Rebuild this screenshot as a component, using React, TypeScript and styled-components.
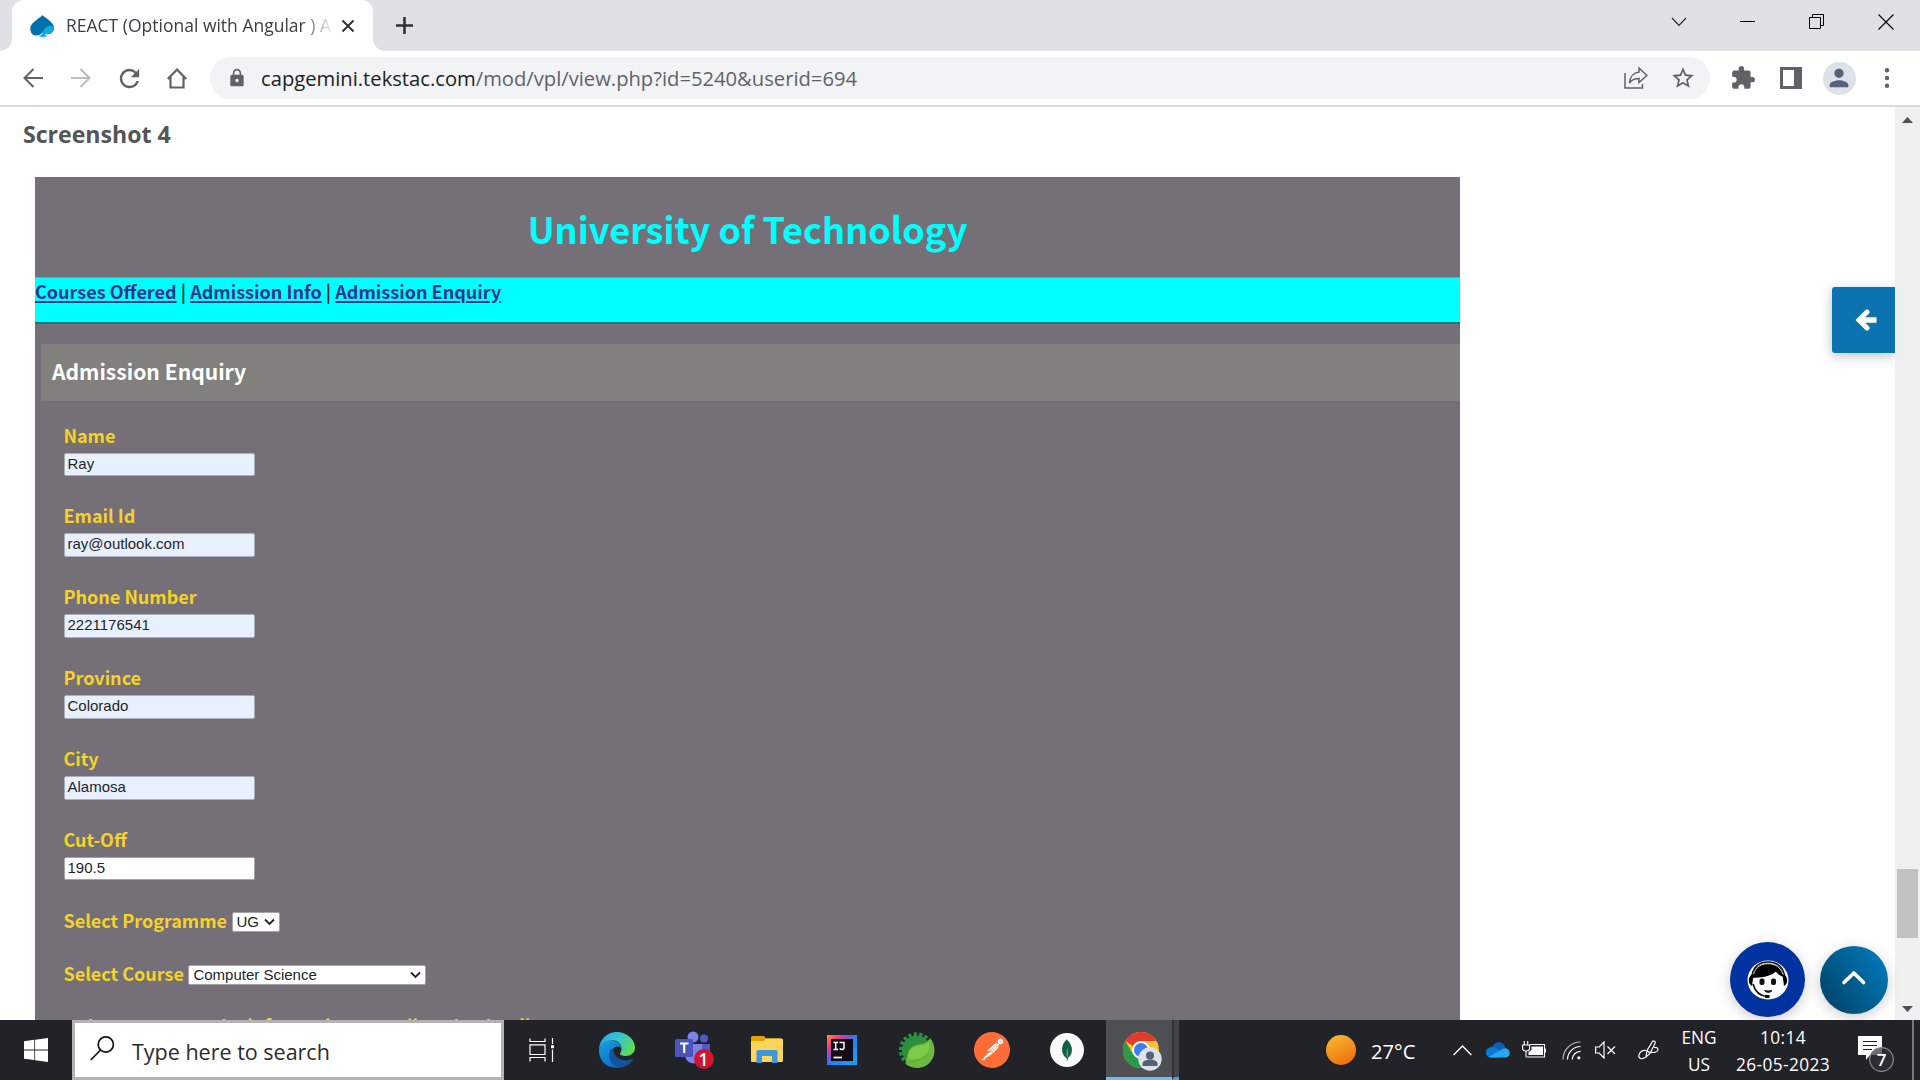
import React from "react";
import styled, { createGlobalStyle } from "styled-components";
import { MdExtension, MdStarBorder, MdLock, MdPerson, MdRefresh } from "react-icons/md";
import { SiPostman, SiMongodb } from "react-icons/si";

const ui = `"Open Sans", "Noto Sans", sans-serif`;
const source = `"Noto Sans CJK SC", "Noto Sans", sans-serif`;
const arial = `"Liberation Sans", Arial, sans-serif`;

const Global = createGlobalStyle`
  * { box-sizing: border-box; }
  body { margin: 0; background: #fff; overflow: hidden; }
  svg { display: block; flex: none; }
`;

const Screen = styled.div`
  width: 1920px;
  height: 1080px;
  display: flex;
  flex-direction: column;
  overflow: hidden;
  font-family: ${ui};
`;

/* ---------- browser chrome ---------- */
const TabStrip = styled.div`
  height: 51px;
  flex: none;
  background: #dee1e6;
  display: flex;
`;
const Shoulder = styled.div<{ $side: "left" | "right" }>`
  width: 12px;
  height: 51px;
  background: radial-gradient(circle at ${(p) => (p.$side === "left" ? "0 0" : "100% 0")}, #dee1e6 11.5px, #fff 12.2px) 0 39px / 12px 12px no-repeat;
`;
const Tab = styled.div`
  width: 361px;
  height: 51px;
  background: #fff;
  border-radius: 12px 12px 0 0;
  display: flex;
  align-items: center;
  padding: 0 15px 0 18px;
`;
const TabTitle = styled.div`
  width: 266px;
  margin-left: 12px;
  overflow: hidden;
  white-space: nowrap;
  font-size: 17.5px;
  line-height: 50px;
  padding-bottom: 1px;
  color: #3c4043;
  mask-image: linear-gradient(90deg, #000 235px, transparent 268px);
`;
const TabClose = styled.div`
  margin-left: auto;
`;
const NewTab = styled.div`
  padding: 16px 0 0 10px;
`;
const WindowButtons = styled.div`
  margin-left: auto;
  display: flex;
  align-items: center;
  height: 43px;
`;
const WinButton = styled.div`
  width: 69px;
  display: flex;
  justify-content: center;
`;
const Toolbar = styled.div`
  height: 56px;
  flex: none;
  display: flex;
  align-items: center;
  border-bottom: 2px solid #d9dadc;
  color: #5f6368;
  padding: 0 9px 0 9px;
`;
const NavButton = styled.div`
  width: 48px;
  display: flex;
  justify-content: center;
`;
const Omnibox = styled.div`
  flex: 1;
  height: 42px;
  margin: 0 9px 0 9px;
  border-radius: 21px;
  background: #f1f3f4;
  display: flex;
  align-items: center;
  padding: 0 14px 0 17px;
  gap: 22.5px;
`;
const Url = styled.div`
  flex: 1;
  margin-left: -8.5px;
  font-size: 20.2px;
  line-height: 42px;
  color: #5f6368;
  white-space: nowrap;
`;
const Host = styled.span`
  color: #202124;
`;
const ToolIcon = styled.div`
  width: 48px;
  display: flex;
  justify-content: center;
`;
const Avatar = styled.div`
  width: 33px;
  height: 33px;
  border-radius: 50%;
  background: #dee1e6;
  color: #55617a;
  display: flex;
  align-items: center;
  justify-content: center;
`;

/* ---------- page ---------- */
const Viewport = styled.div`
  height: 913px;
  flex: none;
  display: flex;
  position: relative;
  overflow: hidden;
`;
const Page = styled.div`
  flex: 1;
  padding: 8px 0 0 23px;
  overflow: hidden;
`;
const Caption = styled.h4`
  margin: 0;
  font-size: 23.1px;
  font-weight: 700;
  line-height: 38px;
  color: #555;
  white-space: nowrap;
`;
const Site = styled.div`
  width: 1425px;
  height: 860px;
  margin: 24px 0 0 12px;
  background: #757077;
  font-family: ${source};
  font-weight: 700;
  overflow: hidden;
`;
const SiteTitle = styled.h1`
  margin: 0;
  height: 100px;
  font-size: 36.1px;
  line-height: 100px;
  padding-top: 1px;
  text-align: center;
  color: #0ff;
  white-space: nowrap;
`;
const SiteNav = styled.nav`
  height: 47px;
  background: #0ff;
  border-top: 1px solid #3bb8bd;
  border-bottom: 2px solid #1e7479;
  font-size: 18.05px;
  line-height: 27px;
  color: #10302c;
  white-space: nowrap;
`;
const NavLink = styled.a`
  color: #2a3391;
  text-decoration: underline;
  text-decoration-thickness: 2px;
  text-underline-offset: 2px;
`;
const FormTitle = styled.h2`
  margin: 20px 0 0 6px;
  height: 57px;
  background: #82807c;
  padding-left: 11px;
  font-size: 21.1px;
  line-height: 54px;
  color: #fff;
  white-space: nowrap;
`;
const Form = styled.div`
  padding: 19.5px 0 0 28.5px;
  display: flex;
  flex-direction: column;
  align-items: flex-start;
  color: #f5d328;
  font-size: 18px;
`;
const Field = styled.div`
  height: 80.9px;
  flex: none;
`;
const Label = styled.label`
  display: block;
  line-height: 29px;
  white-space: nowrap;
`;
const Input = styled.div<{ $plain?: boolean }>`
  width: 191px;
  height: 23.5px;
  margin: 3px 0 0 0;
  border: 1px solid ${(p) => (p.$plain ? "#a5a3a8" : "#a9b0c0")};
  border-radius: 2px;
  background: ${(p) => (p.$plain ? "#fff" : "#e8f0fe")};
  color: #22252b;
  font: 400 15px/19px ${arial};
  padding-left: 3px;
  white-space: nowrap;
`;
const SelectRow = styled.div`
  height: 52.8px;
  flex: none;
  display: flex;
  align-items: flex-start;
`;
const Select = styled.div<{ $width: number }>`
  width: ${(p) => p.$width}px;
  height: 20px;
  margin: 6.5px 0 0 4.5px;
  border: 1px solid #a5a3a8;
  border-radius: 2px;
  background: #fff;
  color: #22252b;
  font: 400 15px/18px ${arial};
  padding: 0 4px;
  display: flex;
  justify-content: space-between;
  align-items: center;
  white-space: nowrap;
`;
const CheckText = styled.label`
  line-height: 29px;
  padding-left: 24px;
  white-space: nowrap;
`;
const Scrollbar = styled.div`
  width: 25px;
  background: #f0f0f0;
  display: flex;
  flex-direction: column;
  align-items: center;
  padding: 10px 0 8px;
`;
const Thumb = styled.div`
  width: 21px;
  height: 69px;
  margin-top: auto;
  margin-bottom: 68px;
  background: #c1c1c1;
`;
const Drawer = styled.div`
  position: absolute;
  right: 25px;
  top: 180px;
  width: 63px;
  height: 66px;
  border-radius: 3px 0 0 3px;
  background: #0b74b0;
  box-shadow: 0 3px 12px rgba(0, 0, 0, 0.25);
  clip-path: inset(-20px 0 -20px -20px);
  display: flex;
  align-items: center;
  justify-content: center;
  padding-left: 5px;
`;
const Floating = styled.div`
  position: absolute;
  right: 32px;
  bottom: 3px;
  display: flex;
  align-items: center;
  gap: 15px;
`;
const Round = styled.div<{ $size: number; $bg: string }>`
  width: ${(p) => p.$size}px;
  height: ${(p) => p.$size}px;
  border-radius: 50%;
  background: ${(p) => p.$bg};
  box-shadow: 0 3px 14px rgba(0, 0, 0, 0.2);
  display: flex;
  align-items: center;
  justify-content: center;
`;

/* ---------- taskbar ---------- */
const Taskbar = styled.div`
  height: 60px;
  flex: none;
  background: #212328;
  color: #fff;
  display: flex;
`;
const Start = styled.div`
  width: 72px;
  display: flex;
  align-items: center;
  justify-content: center;
`;
const Search = styled.div`
  width: 432px;
  height: 60px;
  border: 3px solid #b2b2b2;
  background: #fff;
  color: #2b2b2b;
  display: flex;
  align-items: center;
  padding: 2px 0 0 15px;
  gap: 17px;
  font-size: 21.5px;
  white-space: nowrap;
`;
const SearchGlyph = styled.div`
  padding-bottom: 5px;
`;
const Task = styled.div<{ $nudge?: number }>`
  width: 75px;
  padding-left: ${(p) => p.$nudge ?? 0}px;
  display: flex;
  align-items: center;
  justify-content: center;
`;
const MongoDisc = styled.div`
  width: 34px;
  height: 34px;
  border-radius: 50%;
  background: #fafafa;
  display: flex;
  align-items: center;
  justify-content: center;
`;
const PostmanDisc = styled.div`
  width: 36px;
  height: 36px;
  border-radius: 50%;
  background: radial-gradient(circle, #fff 60%, transparent 61%);
`;
const ActiveTask = styled.div`
  width: 66px;
  height: 60px;
  margin-left: 2px;
  background: #4e5055;
  border-bottom: 3px solid #76b9ed;
  display: flex;
  align-items: center;
  justify-content: center;
  padding: 5px 0 0 6px;
`;
const StackEdge = styled.div`
  width: 7px;
  height: 60px;
  background: #43454a;
  border-left: 2px solid #2f3135;
  border-bottom: 3px solid #5c9bcd;
`;
const Tray = styled.div`
  margin-left: auto;
  display: flex;
  align-items: center;
`;
const Temperature = styled.div`
  width: 73px;
  margin-left: 15px;
  padding-top: 2px;
  font-size: 20.2px;
  white-space: nowrap;
`;
const TrayIcon = styled.div<{ $width: number }>`
  width: ${(p) => p.$width}px;
  display: flex;
  justify-content: center;
`;
const BadgeIcon = styled.div`
  width: 68px;
  padding: 7px 0 0 14px;
`;
const TwoLines = styled.div<{ $width: number; $spacing?: number }>`
  width: ${(p) => p.$width}px;
  font-size: 17.3px;
  letter-spacing: ${(p) => p.$spacing ?? 0}px;
  line-height: 27px;
  padding-top: 1px;
  text-align: center;
  white-space: nowrap;
`;
const ShowDesktop = styled.div`
  width: 8px;
  height: 60px;
  border-left: 2px solid #77787b;
`;

const fields: [string, string, boolean][] = [
  ["Name", "Ray", false],
  ["Email Id", "ray@outlook.com", false],
  ["Phone Number", "2221176541", false],
  ["Province", "Colorado", false],
  ["City", "Alamosa", false],
  ["Cut-Off", "190.5", true],
];

const Favicon = () => (
  <svg width="24" height="24" viewBox="0 0 24 24">
    <path d="M12.500 1C10.500 4 1 8 .3 14 0 19 3 21.500 6.500 21.500 9.500 21.500 11.500 20 12.500 18.500 14 20 16 20.500 18 20.300 22 19.800 24 17 24 13.500 24 8 15 4 12.500 1Z" fill="#0070ad" />
    <path d="M24 12.500C19 10.500 15 13 13 18.200 12.200 20.500 10.500 21.600 8.500 22.300 11 23.300 15 23 17.500 22.300 15.500 21.500 15 20.500 15 19.700 20 21 24 18 24 12.500Z" fill="#12abdb" />
  </svg>
);

const Arrow = ({ flip, color }: { flip?: boolean; color: string }) => (
  <svg width="20" height="20" viewBox="0 0 20 20" fill="none" stroke={color} strokeWidth="2" transform={flip ? "scale(-1 1)" : undefined}>
    <path d="M20 10H2M10.500 1 1.500 10l9 9" />
  </svg>
);

const SelectArrow = () => (
  <svg width="11" height="8" viewBox="0 0 11 8" fill="none" stroke="#222" strokeWidth="1.800">
    <path d="M1 1.500 5.500 6 10 1.500" />
  </svg>
);

const Agent = () => (
  <svg width="42" height="40" viewBox="0 0 42 40">
    <ellipse cx="21" cy="20" rx="20.500" ry="19.500" fill="#fff" />
    <path d="M6 18C5 9 11 3.500 21 3.500S37 9 36.500 17C34 16 30 14 29 11.500 24 17 12 17.500 6 18Z" fill="#000" />
    <path d="M5 15C7 6 13 2 21 2s14.500 4 16.500 13" fill="none" stroke="#111" strokeWidth="1.500" />
    <path d="M6.500 14C9 7 14 3.700 21 3.700s12.500 3.500 15 10.500" fill="none" stroke="#ddd" strokeWidth="1" />
    <path d="M4 15c-3 3-3 9 1 11l1.500-11ZM38 15c3 3 3 9-1 11l-1.500-11Z" fill="#000" />
    <path d="M6 24c2 7 7 12 14 12.500" fill="none" stroke="#111" strokeWidth="1.700" />
    <rect x="18" y="35" width="4.500" height="3" fill="#111" />
    <rect x="12.500" y="18.500" width="5" height="6.500" rx="2" fill="#111" />
    <rect x="24" y="18.500" width="5" height="6.500" rx="2" fill="#111" />
    <path d="M17.500 30.500c2 2.500 5.500 2.500 7.500 0-2 .6-5.500.6-7.500 0Z" fill="#111" stroke="#111" />
  </svg>
);

const TaskView = () => (
  <svg width="26" height="24" viewBox="0 0 26 24" fill="none" stroke="#fff" strokeWidth="1.200">
    <path d="M1 .5v3h15v-3M1 6.800h15v9.700H1ZM1 23.500v-4h15v4M23.500 0v6M23.500 11.500V24" />
    <path d="M22 7.200h3v3h-3z" fill="#fff" stroke="none" />
  </svg>
);

const Edge = () => (
  <svg width="36" height="36" viewBox="0 0 36 36">
    <defs>
      <linearGradient id="eTop" x1="0" y1="0.2" x2="1" y2="0.6">
        <stop offset="0" stopColor="#2aa9e0" />
        <stop offset="0.5" stopColor="#35c5d4" />
        <stop offset="1" stopColor="#62de4a" />
      </linearGradient>
      <linearGradient id="eLeft" x1="0" y1="0" x2="0.6" y2="1">
        <stop offset="0" stopColor="#1c9de0" />
        <stop offset="1" stopColor="#0b6fcb" />
      </linearGradient>
    </defs>
    <path d="M0 17C1 6 9 0 18 0s18 7 18 15.500C36 21 31.500 24 27 24c-4 0-6.500-1.300-6-2.500 3-4 2-11.500-6-13C8 8 2 11 0 17Z" fill="url(#eTop)" />
    <path d="M0 18.500C0 12 5 8.500 11 8.500c6.500 0 11 3.500 11.300 7.500-3-3-7.800-1.500-9.300 2-3 7 3 14 10 17C8.500 38.500 0 29 0 18.500Z" fill="url(#eLeft)" />
    <path d="M11.500 18c-4 8 1 16.500 9.500 17.700C28 35 32 31 34 27.500c.2-.8-.4-1-1-.7C25 30.500 14.500 27 14.300 17 13 16.500 12 17 11.500 18Z" fill="#12549c" />
  </svg>
);

const Teams = () => (
  <svg width="40" height="38" viewBox="0 0 40 38">
    <circle cx="19" cy="6" r="5.500" fill="#7b83eb" />
    <circle cx="30" cy="7.500" r="4" fill="#5059c9" />
    <path d="M22 13h14v9a7 7 0 0 1-14 0Z" fill="#5059c9" />
    <path d="M11 13h17v11a8.500 8.500 0 0 1-17 0Z" fill="#7b83eb" />
    <rect x="1" y="8" width="18" height="18" rx="1.500" fill="#4b53bc" />
    <path d="M6 12.500h8.500M10.200 12.500v9.500" stroke="#fff" strokeWidth="2.200" />
    <circle cx="30" cy="28" r="10" fill="#cf1530" />
    <text x="29.500" y="34.500" textAnchor="middle" fontFamily="Open Sans, sans-serif" fontSize="18" fontWeight="600" fill="#fff">1</text>
  </svg>
);

const Explorer = () => (
  <svg width="32" height="28" viewBox="0 0 32 28">
    <path d="M0 1.500A1.500 1.500 0 0 1 1.500 0H13l2 2.500h15A1.500 1.500 0 0 1 31.500 4v20.500a1.500 1.500 0 0 1-1.500 1.500H1.500A1.500 1.500 0 0 1 0 24.500Z" fill="#e6a100" />
    <path d="M0 5h13l2-2.500h15.500A1.500 1.500 0 0 1 32 4v20.500a1.500 1.500 0 0 1-1.500 1.500h-29A1.500 1.500 0 0 1 0 24.500Z" fill="#ffd45c" />
    <path d="M5.500 27V15.500a1.500 1.500 0 0 1 1.500-1.500h18a1.500 1.500 0 0 1 1.500 1.500V27h-5.500v-7H11v7Z" fill="#3a96dd" />
  </svg>
);

const IntelliJ = () => (
  <svg width="30" height="30" viewBox="0 0 30 30">
    <defs>
      <linearGradient id="ij" x1="0" y1="0" x2="1" y2="1">
        <stop offset="0" stopColor="#fc9a2a" />
        <stop offset="0.2" stopColor="#fe3f70" />
        <stop offset="0.4" stopColor="#8a4ad8" />
        <stop offset="0.55" stopColor="#1788f5" />
        <stop offset="1" stopColor="#1aa0fa" />
      </linearGradient>
    </defs>
    <rect width="30" height="30" fill="url(#ij)" />
    <rect x="4" y="4" width="22" height="22" fill="#160a16" />
    <path d="M6.500 7.500h4.500M6.500 14.500h4.500M8.700 7.500v7M12.500 7.500h4.500v5c0 1.500-1 2-2 2s-1.700-.3-2.200-1" fill="none" stroke="#fff" strokeWidth="1.500" />
    <path d="M6.500 22.500h8.500" stroke="#fff" strokeWidth="1.700" />
  </svg>
);

const Spring = () => (
  <svg width="36" height="36" viewBox="0 0 36 36">
    <circle cx="17.500" cy="18" r="14.500" fill="#2c8f3f" />
    <circle cx="17.500" cy="18" r="15.500" fill="none" stroke="#2c8f3f" strokeWidth="4.500" strokeDasharray="3.200 2.400" pathLength={100.8} />
    <path d="M31 6c5 6 6 15 2 21.500C28 36 18 38.500 8 33c-2-3-2-6 1-8C8 16 15 13 22 12c4-.6 7-2 9-6Z" fill="#6cb93f" />
    <path d="M5 30c9 1 22-2 25-15-1 5-4 10-9 12-5 2.500-10 3-16 3Z" fill="#1f7a39" />
    <path d="M9 27.500C7 20 13 15 20 14c4.500-.6 7.500-1 10-4 1 8-1 13-8 15.500-5 1.800-9 1-13 2Z" fill="#7fc94b" />
  </svg>
);

const Chrome = () => (
  <svg width="39" height="39" viewBox="0 0 39 39">
    <circle cx="18" cy="18" r="18" fill="#fbc230" />
    <path d="M2.400 9A18 18 0 0 1 33.600 9H18a9 9 0 0 0-8 5Z" fill="#e33b2e" />
    <path d="M2.400 9A18 18 0 0 0 18 36l7.800-13.500L10.200 22.500Z" fill="#2b9a47" />
    <circle cx="18" cy="18" r="8.800" fill="#fff" />
    <circle cx="18" cy="18" r="7" fill="#3b7df0" />
    <circle cx="27" cy="27" r="11.700" fill="#dee1e6" />
    <circle cx="27" cy="23.500" r="4" fill="#55617a" />
    <path d="M19.500 34v-2.500c0-3 5-4 7.500-4s7.500 1 7.500 4V34Z" fill="#55617a" />
  </svg>
);

const OneDrive = () => (
  <svg width="24" height="16" viewBox="0 0 24 16">
    <path d="M6 6C7.500 1.500 11 0 13.500.3 17 .8 19 3.500 19.500 6L14 11Z" fill="#0a62b8" />
    <path d="M5 15.500C1 15.500 0 12.500 0 10.500 0 7 3 5 6 5c3.500 0 7 3 12 6l-6 4.500Z" fill="#0d7bd6" />
    <path d="M3 14.800 15 8c1.500-2 7-3 8.500 1.500 1 3-.5 6-4 6H5.500c-1 0-2-.3-2.500-.7Z" fill="#2aa7ef" />
  </svg>
);

const Battery = () => (
  <svg width="25" height="18" viewBox="0 0 25 18" fill="none" stroke="#fff" strokeWidth="1.100">
    <path d="M8 3.500h14.500v12.500H5M23.500 7.500v4" />
    <path d="M9.500 5.500h11.500v8.500H6.500v-3l3-2Z" fill="#fff" stroke="none" />
    <path d="M2.300 0v4M5.700 0v4M.6 4h7v3c0 2-1.500 3-3.500 3S.6 9 .6 7ZM4 10v6.500" />
  </svg>
);

const Wifi = () => (
  <svg width="19" height="19" viewBox="0 0 19 19" fill="none" stroke="#fff" strokeWidth="1.200">
    <path d="M1 18.500A17.500 17.500 0 0 1 18.500 1" stroke="#b9babc" />
    <path d="M5.500 18.500a13 13 0 0 1 13-13M10.300 18.500a8.200 8.200 0 0 1 8.200-8.200" />
    <circle cx="16.800" cy="16.800" r="1.600" fill="#fff" stroke="none" />
  </svg>
);

const Speaker = () => (
  <svg width="21" height="18" viewBox="0 0 21 18" fill="none" stroke="#fff" strokeWidth="1.200">
    <path d="M.6 6h3.600L9 1v16l-4.800-5H.6ZM12.500 5.500l7.500 7.500M20 5.500 12.500 13" />
  </svg>
);

const Pen = () => (
  <svg width="21" height="20" viewBox="0 0 21 20" fill="none" stroke="#fff" strokeWidth="1.200">
    <path d="M8 17 9 10.500 14.500 1.500c.7-1.200 3.300.2 2.700 1.600L12 13.500 8 17ZM9 10.500l3 2.500" />
    <path d="M8 10.500C4 10 .8 12.500.8 16c0 3 4.500 3.800 6.200 1M12.500 12c2 1 7 .5 7.500-2 .2-2-1.500-2.800-4-2.700" />
  </svg>
);

const Notification = () => (
  <svg width="37" height="37" viewBox="0 0 37 37">
    <path d="M0 1h24v19H12l-4 5v-5H0Z" fill="#fff" />
    <path d="M5 6.500h14M5 10.500h14M5 14.500h9" stroke="#222" strokeWidth="1.200" />
    <circle cx="23.500" cy="24.500" r="11.800" fill="#2d2f33" fillOpacity="0.920" stroke="#8b8c8f" strokeWidth="1.200" />
    <path d="M12.500 20A11.800 11.800 0 0 1 24 12.700V20Z" fill="#77787b" fillOpacity="0.800" />
    <text x="23.500" y="30.500" textAnchor="middle" fontFamily="Open Sans, sans-serif" fontSize="17" fontWeight="600" fill="#fff">7</text>
  </svg>
);

export default function App() {
  return (
    <Screen>
      <Global />
      <TabStrip>
        <Shoulder $side="left" />
        <Tab>
          <Favicon />
          <TabTitle>REACT (Optional with Angular ) A</TabTitle>
          <TabClose>
            <svg width="20" height="14" viewBox="0 0 20 14" stroke="#303336" strokeWidth="2">
              <path d="M4.500 1.500 15.500 12.500M15.500 1.500 4.500 12.500" />
            </svg>
          </TabClose>
        </Tab>
        <Shoulder $side="right" />
        <NewTab>
          <svg width="19" height="19" viewBox="0 0 19 19" stroke="#303336" strokeWidth="2.600">
            <path d="M9.500 1v17M1 9.500h17" />
          </svg>
        </NewTab>
        <WindowButtons>
          <WinButton>
            <svg width="16" height="10" viewBox="0 0 16 10" fill="none" stroke="#222" strokeWidth="1.100"><path d="M1 1l7 7.500L15 1" /></svg>
          </WinButton>
          <WinButton>
            <svg width="15" height="1" viewBox="0 0 15 1"><path d="M0 0h15v1H0z" /></svg>
          </WinButton>
          <WinButton>
            <svg width="16" height="16" viewBox="0 0 16 16" fill="none" stroke="#000"><path d="M.5 3.500h11v11H.5ZM3.500 3.500v-3h11v11h-3" /></svg>
          </WinButton>
          <WinButton>
            <svg width="16" height="16" viewBox="0 0 16 16" stroke="#000" strokeWidth="1.100"><path d="M.5.500l15 15M15.500.500l-15 15" /></svg>
          </WinButton>
        </WindowButtons>
      </TabStrip>
      <Toolbar>
        <NavButton><Arrow color="#5f6368" /></NavButton>
        <NavButton><Arrow color="#b9bbbe" flip /></NavButton>
        <NavButton><MdRefresh size={29} /></NavButton>
        <NavButton>
          <svg width="20" height="21" viewBox="0 0 20 21" fill="none" stroke="#5f6368" strokeWidth="2.200">
            <path d="M.8 11 10 1.500 19.200 11M3.500 9v10.500h13V9" />
          </svg>
        </NavButton>
        <Omnibox>
          <MdLock size={20} />
          <Url>
            <Host>capgemini.tekstac.com</Host>/mod/vpl/view.php?id=5240&amp;userid=694
          </Url>
          <svg width="24" height="22" viewBox="0 0 24 22" fill="none" stroke="#5f6368" strokeWidth="1.500">
            <path d="M1 6v15h17.500v-4M15 1l8 7.500-8 7v-4c-5 0-7.500 1.500-9.500 4.500C6 10 9.500 5.500 15 5Z" />
          </svg>
          <MdStarBorder size={26} />
        </Omnibox>
        <ToolIcon><MdExtension size={26} /></ToolIcon>
        <ToolIcon>
          <svg width="22" height="22" viewBox="0 0 22 22"><path fillRule="evenodd" d="M0 0h22v22H0ZM3 3v16h11V3Z" fill="#5f6368" /></svg>
        </ToolIcon>
        <ToolIcon><Avatar><MdPerson size={28} /></Avatar></ToolIcon>
        <ToolIcon>
          <svg width="6" height="20" viewBox="0 0 6 20" fill="#5f6368"><circle cx="3" cy="2.300" r="2.200" /><circle cx="3" cy="10" r="2.200" /><circle cx="3" cy="17.700" r="2.200" /></svg>
        </ToolIcon>
      </Toolbar>

      <Viewport>
        <Page>
          <Caption>Screenshot 4</Caption>
          <Site>
            <SiteTitle>University of Technology</SiteTitle>
            <SiteNav>
              <NavLink>Courses Offered</NavLink> | <NavLink>Admission Info</NavLink> | <NavLink>Admission Enquiry</NavLink>
            </SiteNav>
            <FormTitle>Admission Enquiry</FormTitle>
            <Form>
              {fields.map(([label, value, plain]) => (
                <Field key={label}>
                  <Label>{label}</Label>
                  <Input $plain={plain}>{value}</Input>
                </Field>
              ))}
              <SelectRow>
                <Label>Select Programme</Label>
                <Select $width={48}>UG<SelectArrow /></Select>
              </SelectRow>
              <SelectRow>
                <Label>Select Course</Label>
                <Select $width={238}>Computer Science<SelectArrow /></Select>
              </SelectRow>
              <CheckText>I want to save the information as well as the details</CheckText>
            </Form>
          </Site>
        </Page>
        <Scrollbar>
          <svg width="11" height="6" viewBox="0 0 11 6"><path d="M0 6 5.500 0 11 6Z" fill="#505050" /></svg>
          <Thumb />
          <svg width="11" height="6" viewBox="0 0 11 6"><path d="M0 0 5.500 6 11 0Z" fill="#505050" /></svg>
        </Scrollbar>
        <Drawer>
          <svg width="22" height="22" viewBox="0 0 22 22" fill="none" stroke="#fff" strokeWidth="5">
            <path d="M12 3 4 11l8 8" strokeLinecap="round" />
            <path d="M5 11h16.500" strokeWidth="5.500" />
          </svg>
        </Drawer>
        <Floating>
          <Round $size={75} $bg="#0033a0"><Agent /></Round>
          <Round $size={68} $bg="linear-gradient(55deg, #00456b 10%, #0078b8 90%)">
            <svg width="26" height="20" viewBox="0 0 26 20" fill="none" stroke="#fff" strokeWidth="3.600" strokeLinecap="round" strokeLinejoin="round"><path d="M3 12.500 12.800 3l9.800 9.500" /></svg>
          </Round>
        </Floating>
      </Viewport>

      <Taskbar>
        <Start>
          <svg width="24" height="24" viewBox="0 0 24 24" fill="#fff"><path d="M0 3.300 10.300 1.800v9.600H0ZM11.100 1.700 24 0v11.400H11.100ZM0 12.400h10.300v9.700L0 20.800ZM11.100 12.400H24V24l-12.900-1.800Z" /></svg>
        </Start>
        <Search>
          <SearchGlyph>
            <svg width="25" height="25" viewBox="0 0 25 25" fill="none" stroke="#111" strokeWidth="1.700"><circle cx="15.800" cy="8.500" r="7.600" /><path d="M10.500 14 .8 24" /></svg>
          </SearchGlyph>
          Type here to search
        </Search>
        <Task><TaskView /></Task>
        <Task><Edge /></Task>
        <Task $nudge={4}><Teams /></Task>
        <Task><Explorer /></Task>
        <Task><IntelliJ /></Task>
        <Task $nudge={1}><Spring /></Task>
        <Task $nudge={1}><PostmanDisc><SiPostman size={36} color="#ff6c37" /></PostmanDisc></Task>
        <Task $nudge={1}><MongoDisc><SiMongodb size={22} color="#116149" /></MongoDisc></Task>
        <ActiveTask><Chrome /></ActiveTask>
        <StackEdge />
        <Tray>
          <svg width="30" height="30" viewBox="0 0 30 30">
            <defs><linearGradient id="sun" x1="0.2" y1="0" x2="0.7" y2="1"><stop offset="0" stopColor="#f6b92c" /><stop offset="1" stopColor="#ef6c0f" /></linearGradient></defs>
            <circle cx="15" cy="15" r="15" fill="url(#sun)" />
          </svg>
          <Temperature>27°C</Temperature>
          <TrayIcon $width={36}>
            <svg width="19" height="11" viewBox="0 0 19 11" fill="none" stroke="#fff" strokeWidth="1.300"><path d="M.6 10 9.500 1l8.900 9" /></svg>
          </TrayIcon>
          <TrayIcon $width={36}><OneDrive /></TrayIcon>
          <TrayIcon $width={36}><Battery /></TrayIcon>
          <TrayIcon $width={38}><Wifi /></TrayIcon>
          <TrayIcon $width={31}><Speaker /></TrayIcon>
          <TrayIcon $width={55}><Pen /></TrayIcon>
          <TwoLines $width={46}>ENG<br />US</TwoLines>
          <TwoLines $width={122} $spacing={0.4}>10:14<br />26-05-2023</TwoLines>
          <BadgeIcon><Notification /></BadgeIcon>
          <ShowDesktop />
        </Tray>
      </Taskbar>
    </Screen>
  );
}
